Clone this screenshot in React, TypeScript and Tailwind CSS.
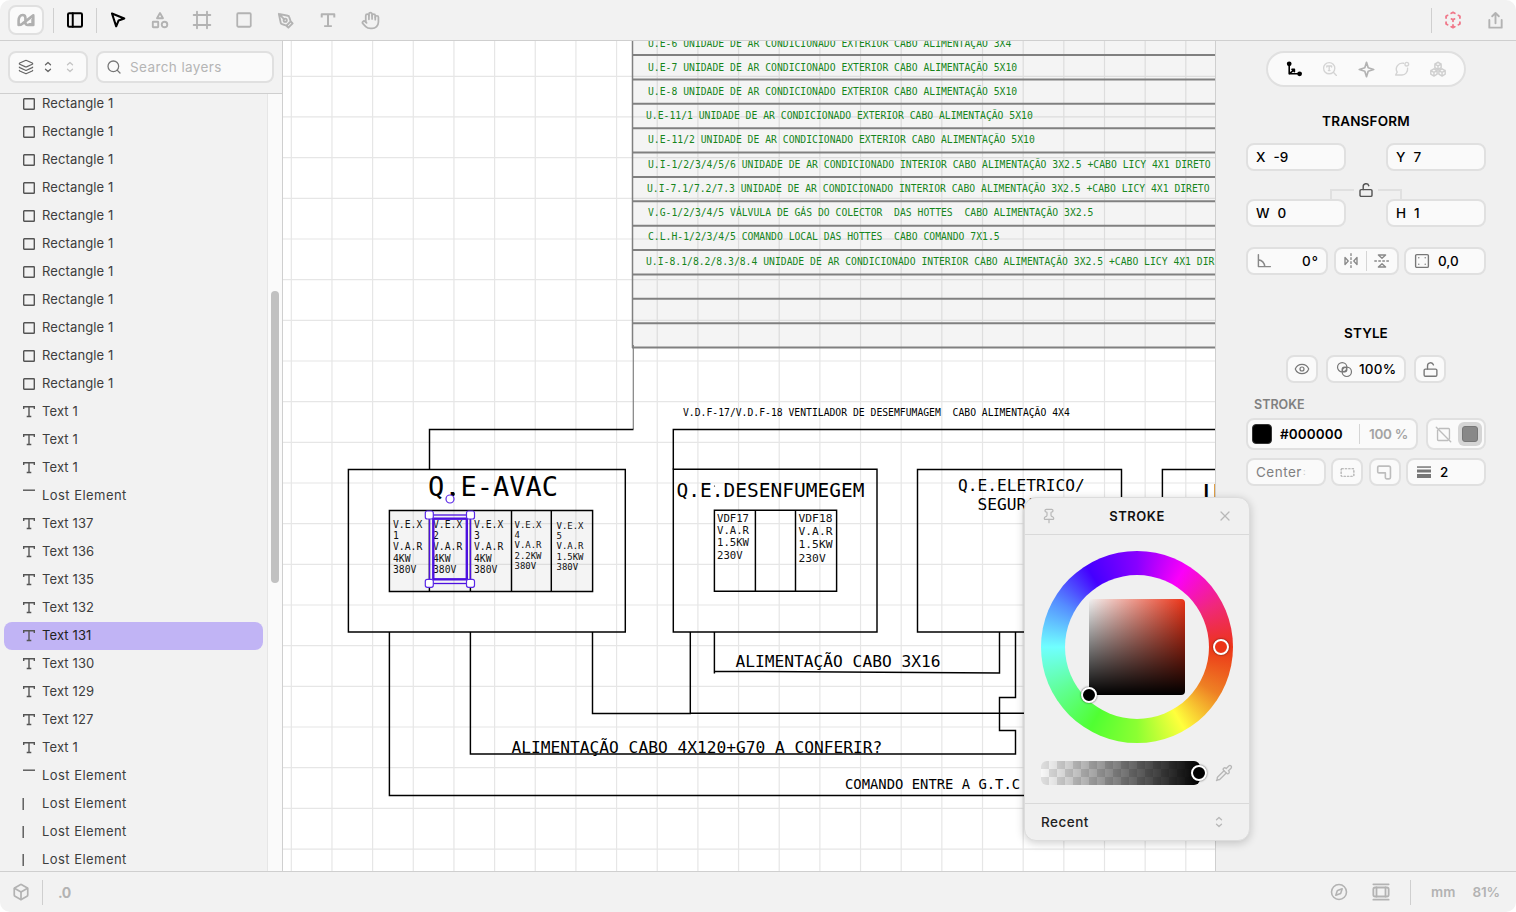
import React from "react";
import { Box, Compass, Eye, Frame, Hand, Layers, Pin, Pipette, Search, X } from "lucide-react";

const MONO = '"DejaVu Sans Mono", "Liberation Mono", monospace';

type IconProps = { children: React.ReactNode; size?: number; width?: number; className?: string };

function Icon({ children, size = 20, width = 1.8, className = "" }: IconProps) {
  return (
    <svg
      width={size}
      height={size}
      viewBox="0 0 20 20"
      fill="none"
      stroke="currentColor"
      strokeWidth={width}
      strokeLinecap="round"
      strokeLinejoin="round"
      className={`shrink-0 ${className}`}
    >
      {children}
    </svg>
  );
}

const SerifT = ({ size = 18, width = 2.2 }: { size?: number; width?: number }) => (
  <Icon size={size} width={width}>
    <path d="M3 6V3.5h14V6M10 3.5v13M6.8 16.8h6.4" strokeLinecap="square" />
  </Icon>
);

const OpenLock = ({ size = 18, width = 1.5 }: { size?: number; width?: number }) => (
  <Icon size={size} width={width}>
    <rect x="2.5" y="9.5" width="15" height="8.5" rx="1.5" />
    <path d="M6.5 9.5V6a3.6 3.6 0 0 1 7-1.4" />
  </Icon>
);

const Chevrons = ({ className = "" }: { className?: string }) => (
  <svg width="8" height="12" viewBox="0 0 8 12" fill="none" stroke="currentColor" strokeWidth="1.3" strokeLinecap="round" strokeLinejoin="round" className={className}>
    <path d="M1.5 3.8 4 1.5l2.5 2.3M1.5 8.2 4 10.5l2.5-2.3" />
  </svg>
);

function Slot({ children, dark }: { children: React.ReactNode; dark?: boolean }) {
  return <div className={`flex h-full w-[42px] items-center justify-center ${dark ? "text-black" : "text-[#b3b3b3]"}`}>{children}</div>;
}

const Divider = () => <div className="h-[25px] w-px bg-[#cfcfcf]" />;

function TopBar() {
  return (
    <header className="flex h-[41px] shrink-0 items-center border-b border-[#cfcfcf] pl-2">
      <div className="mr-[9px] flex h-[30px] w-9 items-center justify-center rounded-lg border-2 border-[#e0e0e0] bg-[#fafafa]">
        <svg width="18" height="14" viewBox="0 0 18 14" fill="none" stroke="#b0b0b0" strokeWidth="2.6" strokeLinejoin="round">
          <path d="M1.600 12V7.500C1.600 4.200 3.300 2 5.600 2 7.300 2 8.400 3.200 8.400 5v4.500c0 1.600.9 2.500 2.400 2.500h5.500V2.400L5.800 10.400C4.300 11.700 3 12 1.600 12z" />
          <path d="M11.500 10.800h3.500V6" strokeWidth="1.500" />
        </svg>
      </div>
      <Divider />
      <Slot dark>
        <Icon size={18} width={2.2}>
          <rect x="2.2" y="2.5" width="15.6" height="15" rx="1.5" />
          <path d="M7.500 2.500v15" />
        </Icon>
      </Slot>
      <Divider />
      <Slot dark>
        <Icon size={18} width={2.3}>
          <path d="M3.300 2.800 17 8.300l-6.300 2.200L8 17z" />
        </Icon>
      </Slot>
      <Slot>
        <Icon size={18} width={2.1}>
          <path d="M10 2.200 13.300 8H6.700z" />
          <rect x="2" y="12" width="6" height="6" rx=".5" />
          <circle cx="15" cy="15" r="3.1" />
        </Icon>
      </Slot>
      <Slot><Frame size={20} strokeWidth={2.2} /></Slot>
      <Slot>
        <Icon size={18} width={2}>
          <rect x="2.500" y="2.500" width="15" height="15" rx="1" />
        </Icon>
      </Slot>
      <Slot>
        <Icon size={19} width={2} className="-translate-x-px">
          <path d="m3 3 2 9.500c.1.700.6 1.200 1.300 1.400l4.700 1.600 4.500-4.500L13.900 6.300c-.2-.7-.7-1.200-1.400-1.300zM3 3l5.500 5.500M11 15.500l2 2 4.500-4.500-2-2" />
          <circle cx="9.700" cy="9.700" r="1.700" />
        </Icon>
      </Slot>
      <Slot><SerifT size={18} width={2.2} /></Slot>
      <Slot><Hand size={19} strokeWidth={2.2} /></Slot>
      <div className="ml-auto flex h-full items-center">
        <Divider />
        <div className="flex w-[42px] justify-center text-[#f0788a]">
          <Icon size={18} width={2}>
            <path d="M8 2.500 10 1.500l2 1M16 4.800l1.700 1v2M17.700 12.500v1.800L16 15.300M12 17.500l-2 1-2-1M4 15.300l-1.700-1v-1.800M2.300 7.800v-2l1.700-1M8.300 8.800 10 9.700l1.700-.9M10 9.700v1.800M10 15.500v2.500" />
          </Icon>
        </div>
        <div className="flex w-[42px] justify-center text-[#b3b3b3]">
          <Icon size={19} width={2}>
            <path d="M3.500 9.500v8h13v-8M10 13V2.500M6.500 5.500 10 2l3.500 3.500" />
          </Icon>
        </div>
      </div>
    </header>
  );
}

type LayerKind = "rect" | "text" | "h" | "v";
type Layer = { kind: LayerKind; name: string; active?: boolean };

const LAYERS: Layer[] = [
  ...Array.from({ length: 11 }, (): Layer => ({ kind: "rect", name: "Rectangle 1" })),
  { kind: "text", name: "Text 1" },
  { kind: "text", name: "Text 1" },
  { kind: "text", name: "Text 1" },
  { kind: "h", name: "Lost Element" },
  { kind: "text", name: "Text 137" },
  { kind: "text", name: "Text 136" },
  { kind: "text", name: "Text 135" },
  { kind: "text", name: "Text 132" },
  { kind: "text", name: "Text 131", active: true },
  { kind: "text", name: "Text 130" },
  { kind: "text", name: "Text 129" },
  { kind: "text", name: "Text 127" },
  { kind: "text", name: "Text 1" },
  { kind: "h", name: "Lost Element" },
  { kind: "v", name: "Lost Element" },
  { kind: "v", name: "Lost Element" },
  { kind: "v", name: "Lost Element" },
];

function LayerGlyph({ kind }: { kind: LayerKind }) {
  return (
    <svg width="14" height="14" viewBox="0 0 14 14" fill="none" stroke="#555" strokeWidth="1.4">
      {kind === "rect" && <rect x="1.7" y="1.7" width="10.6" height="10.6" rx=".6" />}
      {kind === "text" && <path d="M1.700 4V1.700h10.600V4M7 1.700v9.800M4.700 11.500h4.600" />}
      {kind === "h" && <path d="M1 1.200h12" />}
      {kind === "v" && <path d="M1.200 1v12" />}
    </svg>
  );
}

function LeftPanel() {
  return (
    <aside className="flex w-[283px] shrink-0 flex-col border-r border-[#cfcfcf]">
      <div className="flex h-[53px] shrink-0 items-center gap-2 border-b border-[#cfcfcf] pl-2">
        <div className="flex h-8 w-20 items-center rounded-lg border-2 border-[#e0e0e0] bg-[#fafafa] pl-2 text-[#666]">
          <Layers size={16} strokeWidth={1.8} />
          <Chevrons className="ml-[10px]" />
          <Chevrons className="ml-[14px] text-[#c4c4c4]" />
        </div>
        <div className="flex h-8 w-[178px] items-center rounded-lg border-2 border-[#e0e0e0] bg-[#fafafa] pl-2 text-[#777]">
          <Search size={16} strokeWidth={1.9} />
          <span className="ml-2 text-[13.5px] tracking-[0.4px] text-[#b5b5b5]">Search layers</span>
        </div>
      </div>
      <div className="flex min-h-0 flex-1">
        <div className="h-full w-[267px] overflow-hidden">
          <div className="-mt-[4px] flex flex-col">
            {LAYERS.map((l, i) => (
              <div key={i} className={`ml-1 mr-1 flex h-7 shrink-0 items-center rounded-lg pl-[18px] ${l.active ? "bg-[#c1b4f5] text-[#222]" : "text-[#3d3d3d]"}`}>
                <LayerGlyph kind={l.kind} />
                <span className={`ml-[6px] text-[13px] ${l.kind === "h" || l.kind === "v" ? "tracking-[0.45px]" : "tracking-[0.12px]"}`}>{l.name}</span>
              </div>
            ))}
          </div>
        </div>
        <div className="flex-1 border-l border-[#e6e6e6] bg-[#fafafa] pl-[3px] pt-[197px]">
          <div className="h-[292px] w-2 rounded-full bg-[#c1c1c1]" />
        </div>
      </div>
    </aside>
  );
}

type Label = [x: number, y: number, advance: number, text: string];

const TABLE: Label[] = [
  [648, 47, 5.86, "U.E-6 UNIDADE DE AR CONDICIONADO EXTERIOR CABO ALIMENTAÇÃO 3X4"],
  [648, 71, 5.86, "U.E-7 UNIDADE DE AR CONDICIONADO EXTERIOR CABO ALIMENTAÇÃO 5X10"],
  [648, 95, 5.86, "U.E-8 UNIDADE DE AR CONDICIONADO EXTERIOR CABO ALIMENTAÇÃO 5X10"],
  [646, 119, 5.86, "U.E-11/1 UNIDADE DE AR CONDICIONADO EXTERIOR CABO ALIMENTAÇÃO 5X10"],
  [648, 143, 5.86, "U.E-11/2 UNIDADE DE AR CONDICIONADO EXTERIOR CABO ALIMENTAÇÃO 5X10"],
  [648, 168, 5.86, "U.I-1/2/3/4/5/6 UNIDADE DE AR CONDICIONADO INTERIOR CABO ALIMENTAÇÃO 3X2.5 +CABO LICY 4X1 DIRETO"],
  [647, 192, 5.86, "U.I-7.1/7.2/7.3 UNIDADE DE AR CONDICIONADO INTERIOR CABO ALIMENTAÇÃO 3X2.5 +CABO LICY 4X1 DIRETO"],
  [648, 216, 5.86, "V.G-1/2/3/4/5 VÁLVULA DE GÁS DO COLECTOR  DAS HOTTES  CABO ALIMENTAÇÃO 3X2.5"],
  [648, 240, 5.86, "C.L.H-1/2/3/4/5 COMANDO LOCAL DAS HOTTES  CABO COMANDO 7X1.5"],
  [646, 265, 5.86, "U.I-8.1/8.2/8.3/8.4 UNIDADE DE AR CONDICIONADO INTERIOR CABO ALIMENTAÇÃO 3X2.5 +CABO LICY 4X1 DIRETO"],
];

const LABELS: Label[] = [
  [683, 416, 5.86, "V.D.F-17/V.D.F-18 VENTILADOR DE DESEMFUMAGEM  CABO ALIMENTAÇÃO 4X4"],
  [428, 496, 16.25, "Q.E-AVAC"],
  [676.5, 497, 11.75, "Q.E.DESENFUMEGEM"],
  [958, 491, 9.76, "Q.E.ELETRICO/"],
  [977.5, 510, 9.76, "SEGURANÇA"],
  [1203, 504, 16.25, "U"],
  [735.5, 667, 9.76, "ALIMENTAÇÃO CABO 3X16"],
  [511.5, 753, 9.76, "ALIMENTAÇÃO CABO 4X120+G70 A CONFERIR?"],
  [845, 789, 8.34, "COMANDO ENTRE A G.T.C"],
];

const column = (x: number, advance: number, ys: number[], lines: string[]): Label[] =>
  lines.map((t, i): Label => [x, ys[i], advance, t]);

const CELLS: Label[] = [
  ...column(393, 5.86, [528, 539, 550, 562, 573], ["V.E.X", "1", "V.A.R", "4KW", "380V"]),
  ...column(433, 5.86, [528, 539, 550, 562, 573], ["V.E.X", "2", "V.A.R", "4KW", "380V"]),
  ...column(474, 5.86, [528, 539, 550, 562, 573], ["V.E.X", "3", "V.A.R", "4KW", "380V"]),
  ...column(514.5, 5.4, [528, 538, 548, 559, 569], ["V.E.X", "4", "V.A.R", "2.2KW", "380V"]),
  ...column(556.5, 5.4, [529, 539, 549, 560, 570], ["V.E.X", "5", "V.A.R", "1.5KW", "380V"]),
  ...column(717, 6.4, [522, 534, 546, 559], ["VDF17", "V.A.R", "1.5KW", "230V"]),
  ...column(798.5, 6.8, [522, 535, 548, 562], ["VDF18", "V.A.R", "1.5KW", "230V"]),
];

function Labels({ items, fill }: { items: Label[]; fill: string }) {
  return (
    <g fill={fill} fontFamily={MONO} style={{ whiteSpace: "pre" }}>
      {items.map(([x, y, advance, text], i) => (
        <text key={i} x={x} y={y} fontSize={advance / 0.602} textLength={advance * text.length} xmlSpace="preserve">
          {text}
        </text>
      ))}
    </g>
  );
}

function Canvas() {
  const cols = Array.from({ length: 23 }, (_, i) => 291.3 + i * 40.66);
  const rows = Array.from({ length: 20 }, (_, i) => 76.3 + i * 40.67);
  const table = Array.from({ length: 13 }, (_, i) => 55 + i * 24.38);
  return (
    <svg width="932" height="830" viewBox="283 41 932 830" className="shrink-0 bg-white">
      <g stroke="#e6e6e6" strokeWidth="1.2">
        {cols.map((x) => <path key={x} d={`M${x} 41V871`} />)}
        {rows.map((y) => <path key={y} d={`M283 ${y}H1215`} />)}
      </g>
      <rect x="632" y="41" width="583" height="307" fill="#808080" fillOpacity="0.09" />
      <g stroke="#808080" strokeWidth="2">
        {table.map((y) => <path key={y} d={`M632 ${y}H1215`} />)}
        <path d="M632.500 41V348" strokeWidth="1.5" />
        <path d="M633.300 345V429" strokeWidth="1.2" />
      </g>
      <rect x="389" y="510" width="204" height="82" fill="#808080" fillOpacity="0.09" />
      <g fill="none" stroke="#000" strokeWidth="1.45">
        <path d="M633.500 429.400H429.500V469.500" />
        <path d="M1215 429.400H673.300V469.500" />
        <path d="M348.400 469.400H625.300V632H348.400z" />
        <path d="M389.400 510.400H592.600V591.500H389.400zM429.400 510V591M470.400 510V591M511.500 510V591M551.300 510V591" />
        <path d="M673.300 469.200H877V632H673.300z" />
        <path d="M714.400 510.300H836.600V591.300H714.400zM755.400 510V591M795.500 510V591" />
        <path d="M917.500 469.400H1121.500V632H917.500z" />
        <path d="M1215 469.400H1162.400V632H1215" />
        <path d="M389.400 632V795.400H1100" />
        <path d="M470.400 632V754H1015.500V730.500H999.500V697.500H1015.500V632" />
        <path d="M592.500 632V713.400H690.300V632M690 713.200H1100" />
        <path d="M714.400 632V673.500M714 671.300 999.500 673V632" />
      </g>
      <Labels items={TABLE} fill="#16851c" />
      <Labels items={LABELS} fill="#000" />
      <Labels items={CELLS} fill="#111" />
      <circle cx="714.5" cy="486" r=".6" />
      <g fill="none" stroke="#4d10e0">
        <rect x="429.5" y="515" width="41" height="68.5" strokeWidth="1.3" />
        <rect x="433.3" y="518.7" width="33.5" height="60.6" strokeWidth="2.4" />
      </g>
      <g fill="#fff" stroke="#5a28e8" strokeWidth="1.2">
        {[[429.3, 515], [470.5, 515], [429.3, 583.3], [470.5, 583.3]].map(([x, y]) => (
          <rect key={`${x}-${y}`} x={x - 4} y={y - 4} width="8" height="8" rx="2" />
        ))}
        <circle cx="450" cy="499" r="4" />
      </g>
      <circle cx="453.2" cy="494" r="1.6" />
    </svg>
  );
}

function Field({ children, className }: { children: React.ReactNode; className: string }) {
  return <div className={`flex shrink-0 items-center rounded-lg border-2 border-[#e0e0e0] bg-[#fafafa] ${className}`}>{children}</div>;
}

function RightPanel() {
  return (
    <aside className="flex w-[301px] shrink-0 flex-col items-center border-l border-[#cfcfcf] bg-[#f0f0f0] text-[13.5px] font-medium text-black">
      <div className="flex w-[240px] flex-col">
        <div className="mx-auto mt-[10px] flex h-9 w-[200px] items-center justify-center rounded-full border-2 border-[#e0e0e0] bg-[#fafafa]">
          <div className="flex w-9 justify-center">
            <Icon size={16} width={2}>
              <path d="M4 4v12h12M4 16l6-5M7.500 10.500h3v3" />
              <circle cx="4" cy="3.500" r="2" fill="currentColor" />
              <circle cx="17" cy="16" r="2" fill="currentColor" />
            </Icon>
          </div>
          <div className="flex w-9 justify-center text-[#d4d4d4]">
            <Icon size={16} width={1.7}>
              <circle cx="9" cy="9" r="7" />
              <path d="m14.500 14.500 3.500 3.500M6 7.500V6.200h6v1.300M9 6.200v5.600M8 12h2" />
            </Icon>
          </div>
          <div className="flex w-9 justify-center text-[#b3b3b3]">
            <Icon size={17} width={2}>
              <path d="M10 1.500 12 8 18.500 10 12 12 10 18.500 8 12 1.500 10 8 8z" />
            </Icon>
          </div>
          <div className="flex w-9 justify-center text-[#d4d4d4]">
            <Icon size={16} width={1.700}>
              <path d="M12 2.800A7.500 7.500 0 0 0 4 14l-2 3.500h8A7.500 7.500 0 0 0 17 9" />
              <circle cx="16" cy="4" r="2.3" />
            </Icon>
          </div>
          <div className="flex w-9 justify-center text-[#cfcfcf]">
            <Icon size={18} width={1.6}>
              <path d="m10 2.500 3.500 2v4L10 10.500 6.500 8.500v-4zM6.500 4.500 10 6.500l3.500-2M10 6.500v4M5.500 9.800l3.500 2v4l-3.500 2-3.500-2v-4zM2 11.800l3.500 2 3.500-2M5.500 13.800v4M14.500 9.800l3.500 2v4l-3.500 2-3.500-2v-4zM11 11.800l3.500 2 3.500-2M14.500 13.800v4" />
            </Icon>
          </div>
        </div>
        <h2 className="mt-[24px] h-5 text-center text-[13.5px] font-semibold leading-5 tracking-[0.2px]">TRANSFORM</h2>
        <div className="mt-[12px] flex justify-between">
          <Field className="h-7 w-[100px] gap-2 pl-2"><span>X</span><span>-9</span></Field>
          <Field className="h-7 w-[100px] gap-2 pl-2"><span>Y</span><span>7</span></Field>
        </div>
        <div className="flex h-7 items-center justify-center pt-3">
          <div className="mr-1 mt-[6px] h-[10px] w-6 border-l-2 border-t-2 border-[#e0e0e0]" />
          <div className="-mt-[3px] text-[#555]"><OpenLock size={16} width={1.8} /></div>
          <div className="ml-1 mt-[6px] h-[10px] w-6 border-r-2 border-t-2 border-[#e0e0e0]" />
        </div>
        <div className="flex justify-between">
          <Field className="h-7 w-[100px] gap-2 pl-2"><span>W</span><span>0</span></Field>
          <Field className="h-7 w-[100px] gap-2 pl-2"><span>H</span><span>1</span></Field>
        </div>
        <div className="mt-5 flex justify-between">
          <Field className="h-7 w-[82px] justify-between pl-2 pr-[7px]">
            <Icon size={16} width={1.8} className="text-[#888]"><path d="M3 2v15h15M3 8.500q7 1 8 8.500" /></Icon>
            <span className="tracking-[1px]">0°</span>
          </Field>
          <Field className="h-7 w-[65px] text-[#888]">
            <div className="flex flex-1 justify-center">
              <Icon size={16} width={1.7}><path d="M10 1v2M10 6v2M10 11v2M10 16v2M2.500 5.500v9l4-4.500zM17.500 5.500v9l-4-4.500z" /></Icon>
            </div>
            <div className="h-5 w-px bg-[#d5d5d5]" />
            <div className="flex flex-1 justify-center">
              <Icon size={16} width={1.7}><path d="M1 10h2M6 10h2M11 10h2M16 10h2M5.500 2.500h9l-4.500 4zM5.500 17.500h9l-4.500-4z" /></Icon>
            </div>
          </Field>
          <Field className="h-7 w-[82px] pl-2">
            <Icon size={16} width={1.7} className="text-[#777]">
              <rect x="2" y="2" width="16" height="16" rx="1.5" />
              <path d="M6 6h.01M14 6h.01M6 14h.01M14 14h.01" />
            </Icon>
            <span className="ml-2">0,0</span>
          </Field>
        </div>
        <h2 className="mt-[48px] h-5 text-center text-[13.5px] font-semibold leading-5 tracking-[0.1px]">STYLE</h2>
        <div className="mt-[12px] flex justify-center gap-2 text-[#777]">
          <Field className="h-7 w-8 justify-center"><Eye size={16} strokeWidth={1.8} /></Field>
          <Field className="h-7 w-20 pl-2">
            <Icon size={17} width={1.4}>
              <circle cx="7.3" cy="7.3" r="5.5" />
              <circle cx="12.7" cy="12.7" r="5.5" />
              <circle cx="10" cy="10" r="2.8" />
            </Icon>
            <span className="ml-[6px] tracking-[0.2px] text-black">100%</span>
          </Field>
          <Field className="h-7 w-8 justify-center"><OpenLock size={17} width={1.6} /></Field>
        </div>
        <h3 className="mt-[12px] h-5 pl-2 text-[12.5px] font-semibold leading-5 text-[#808080]">STROKE</h3>
        <div className="mt-[3px] flex justify-between">
          <Field className="h-8 w-[172px] pl-1">
            <div className="h-5 w-5 rounded border border-[#333] bg-black" />
            <span className="ml-2 w-[79px] font-semibold tracking-[0.1px]">#000000</span>
            <div className="h-5 w-px bg-[#d5d5d5]" />
            <span className="ml-[9px] font-semibold tracking-[-0.3px] text-[#a3a3a3]">100 %</span>
          </Field>
          <Field className="h-8 w-[60px] justify-between">
            <div className="flex flex-1 justify-center text-[#bdbdbd]">
              <Icon size={17} width={1.6}><path d="M5 3h11a1 1 0 0 1 1 1v11M15 17H4a1 1 0 0 1-1-1V5M1.500 1.500l17 17" /></Icon>
            </div>
            <div className="mr-[2px] flex h-6 w-6 items-center justify-center rounded-md bg-[#d5d5d5]">
              <div className="h-4 w-4 rounded-[3px] border border-[#777] bg-[#888]" />
            </div>
          </Field>
        </div>
        <div className="mt-2 flex justify-between">
          <Field className="h-7 w-20 pl-2 font-normal text-[#808080]">
            <span className="tracking-[0.5px]">Center</span>
            <span className="ml-px text-[9px] text-[#c8c8c8]">:</span>
          </Field>
          <Field className="h-7 w-8 justify-center text-[#a8a8a8]">
            <Icon size={15} width={1.6}><rect x="1.5" y="5" width="17" height="10" rx="1" strokeDasharray="2 2.5" /></Icon>
          </Field>
          <Field className="h-7 w-8 justify-center text-[#bdbdbd]">
            <Icon size={17} width={1.9}><path d="M3.500 2.500h11.500a2 2 0 0 1 2 2V16a1.500 1.500 0 0 1-1.500 1.500h-3A1.500 1.500 0 0 1 11 16v-5.500H3.500A1.500 1.500 0 0 1 2 9V4a1.500 1.500 0 0 1 1.500-1.500z" /></Icon>
          </Field>
          <Field className="h-7 w-20 pl-[9px]">
            <svg width="14" height="12" fill="#777"><rect width="14" height="1.5" y=".3" /><rect width="14" height="3" y="3.5" /><rect width="14" height="4" y="8" /></svg>
            <span className="ml-[9px]">2</span>
          </Field>
        </div>
      </div>
    </aside>
  );
}

function ColorPopup() {
  return (
    <div className="absolute left-[1024px] top-[497px] flex h-[344px] w-[226px] flex-col rounded-xl border border-[#dcdcdc] bg-[#f0f0f0] shadow-[0_2px_10px_rgba(0,0,0,0.2)]">
      <div className="flex h-[37px] shrink-0 items-center justify-between border-b border-[#d9d9d9] px-4 text-[#b8b8b8]">
        <Pin size={16} strokeWidth={1.8} />
        <span className="pt-px text-[13px] font-semibold tracking-[0.5px] text-[#111]">STROKE</span>
        <X size={16} strokeWidth={1.9} />
      </div>
      <div className="flex h-[268px] shrink-0 flex-col px-4 pt-4">
        <div className="relative h-48 w-48 rounded-full bg-[conic-gradient(#8800ff_0deg,#fa00fa_31deg,#f0287a_62deg,#ec3418_90deg,#ee8024_120deg,#ffff3c_150deg,#8cff32_180deg,#50ff32_210deg,#60ff94_240deg,#70ffff_270deg,#558cff_300deg,#4400ff_328deg,#8800ff_360deg)]">
          <div className="absolute inset-6 flex items-center justify-center rounded-full bg-[#f0f0f0]">
            <div className="h-24 w-24 rounded bg-[linear-gradient(to_top,#000,transparent),linear-gradient(to_right,#f0f0f0,#ec3418)]" />
          </div>
          <div className="absolute left-[172px] top-[88px] h-4 w-4 rounded-full border-2 border-white bg-[#ec3418] shadow-[0_0_2px_rgba(0,0,0,0.7)]" />
          <div className="absolute left-[40px] top-[136px] h-4 w-4 rounded-full border-2 border-white bg-black shadow-[0_0_2px_rgba(0,0,0,0.7)]" />
        </div>
        <div className="mt-[18px] flex items-center">
          <div className="relative h-6 w-[159px] rounded-md bg-[linear-gradient(to_right,transparent,#000),conic-gradient(#f8f8f8_25%,#dedede_0_50%,#f8f8f8_0_75%,#dedede_0)] bg-[length:100%_100%,16px_16px]">
            <div className="absolute left-[150px] top-1 h-4 w-4 rounded-full border-2 border-white bg-black shadow-[0_0_2px_rgba(0,0,0,0.7)]" />
          </div>
          <Pipette size={18} strokeWidth={1.8} className="ml-[15px] text-[#b8b8b8]" />
        </div>
      </div>
      <div className="flex flex-1 items-center justify-between border-t border-[#d9d9d9] pl-4 pr-[26px]">
        <span className="text-[13.5px] font-medium tracking-[0.5px] text-[#222]">Recent</span>
        <Chevrons className="text-[#b8b8b8]" />
      </div>
    </div>
  );
}

function StatusBar() {
  return (
    <footer className="flex h-[41px] shrink-0 items-center border-t border-[#cfcfcf] text-[13.5px] font-semibold text-[#b3b3b3]">
      <div className="flex w-[42px] justify-center"><Box size={18} strokeWidth={2.3} /></div>
      <Divider />
      <span className="ml-[15px] text-[14px] font-bold tracking-[-0.5px]">.0</span>
      <div className="ml-auto flex items-center pr-4">
        <Compass size={18} strokeWidth={2.1} />
        <Icon size={18} width={2} className="ml-6 mr-5">
          <path d="M1.500 1.500h17M1.500 18.500h17" />
          <rect x="1.5" y="5" width="17" height="10" rx="2" />
          <path d="M5 5v10M15 5v10" />
        </Icon>
        <Divider />
        <span className="ml-5">mm</span>
        <span className="ml-[17px] tracking-[-0.1px]">81%</span>
      </div>
    </footer>
  );
}

export default function App() {
  return (
    <div className="h-[912px] w-[1516px] overflow-hidden bg-white font-['Inter','Liberation_Sans',sans-serif]">
      <div className="relative flex h-full flex-col overflow-hidden rounded-[10px] bg-[#f2f2f2]">
        <TopBar />
        <main className="flex min-h-0 flex-1">
          <LeftPanel />
          <Canvas />
          <RightPanel />
        </main>
        <StatusBar />
        <ColorPopup />
      </div>
    </div>
  );
}
